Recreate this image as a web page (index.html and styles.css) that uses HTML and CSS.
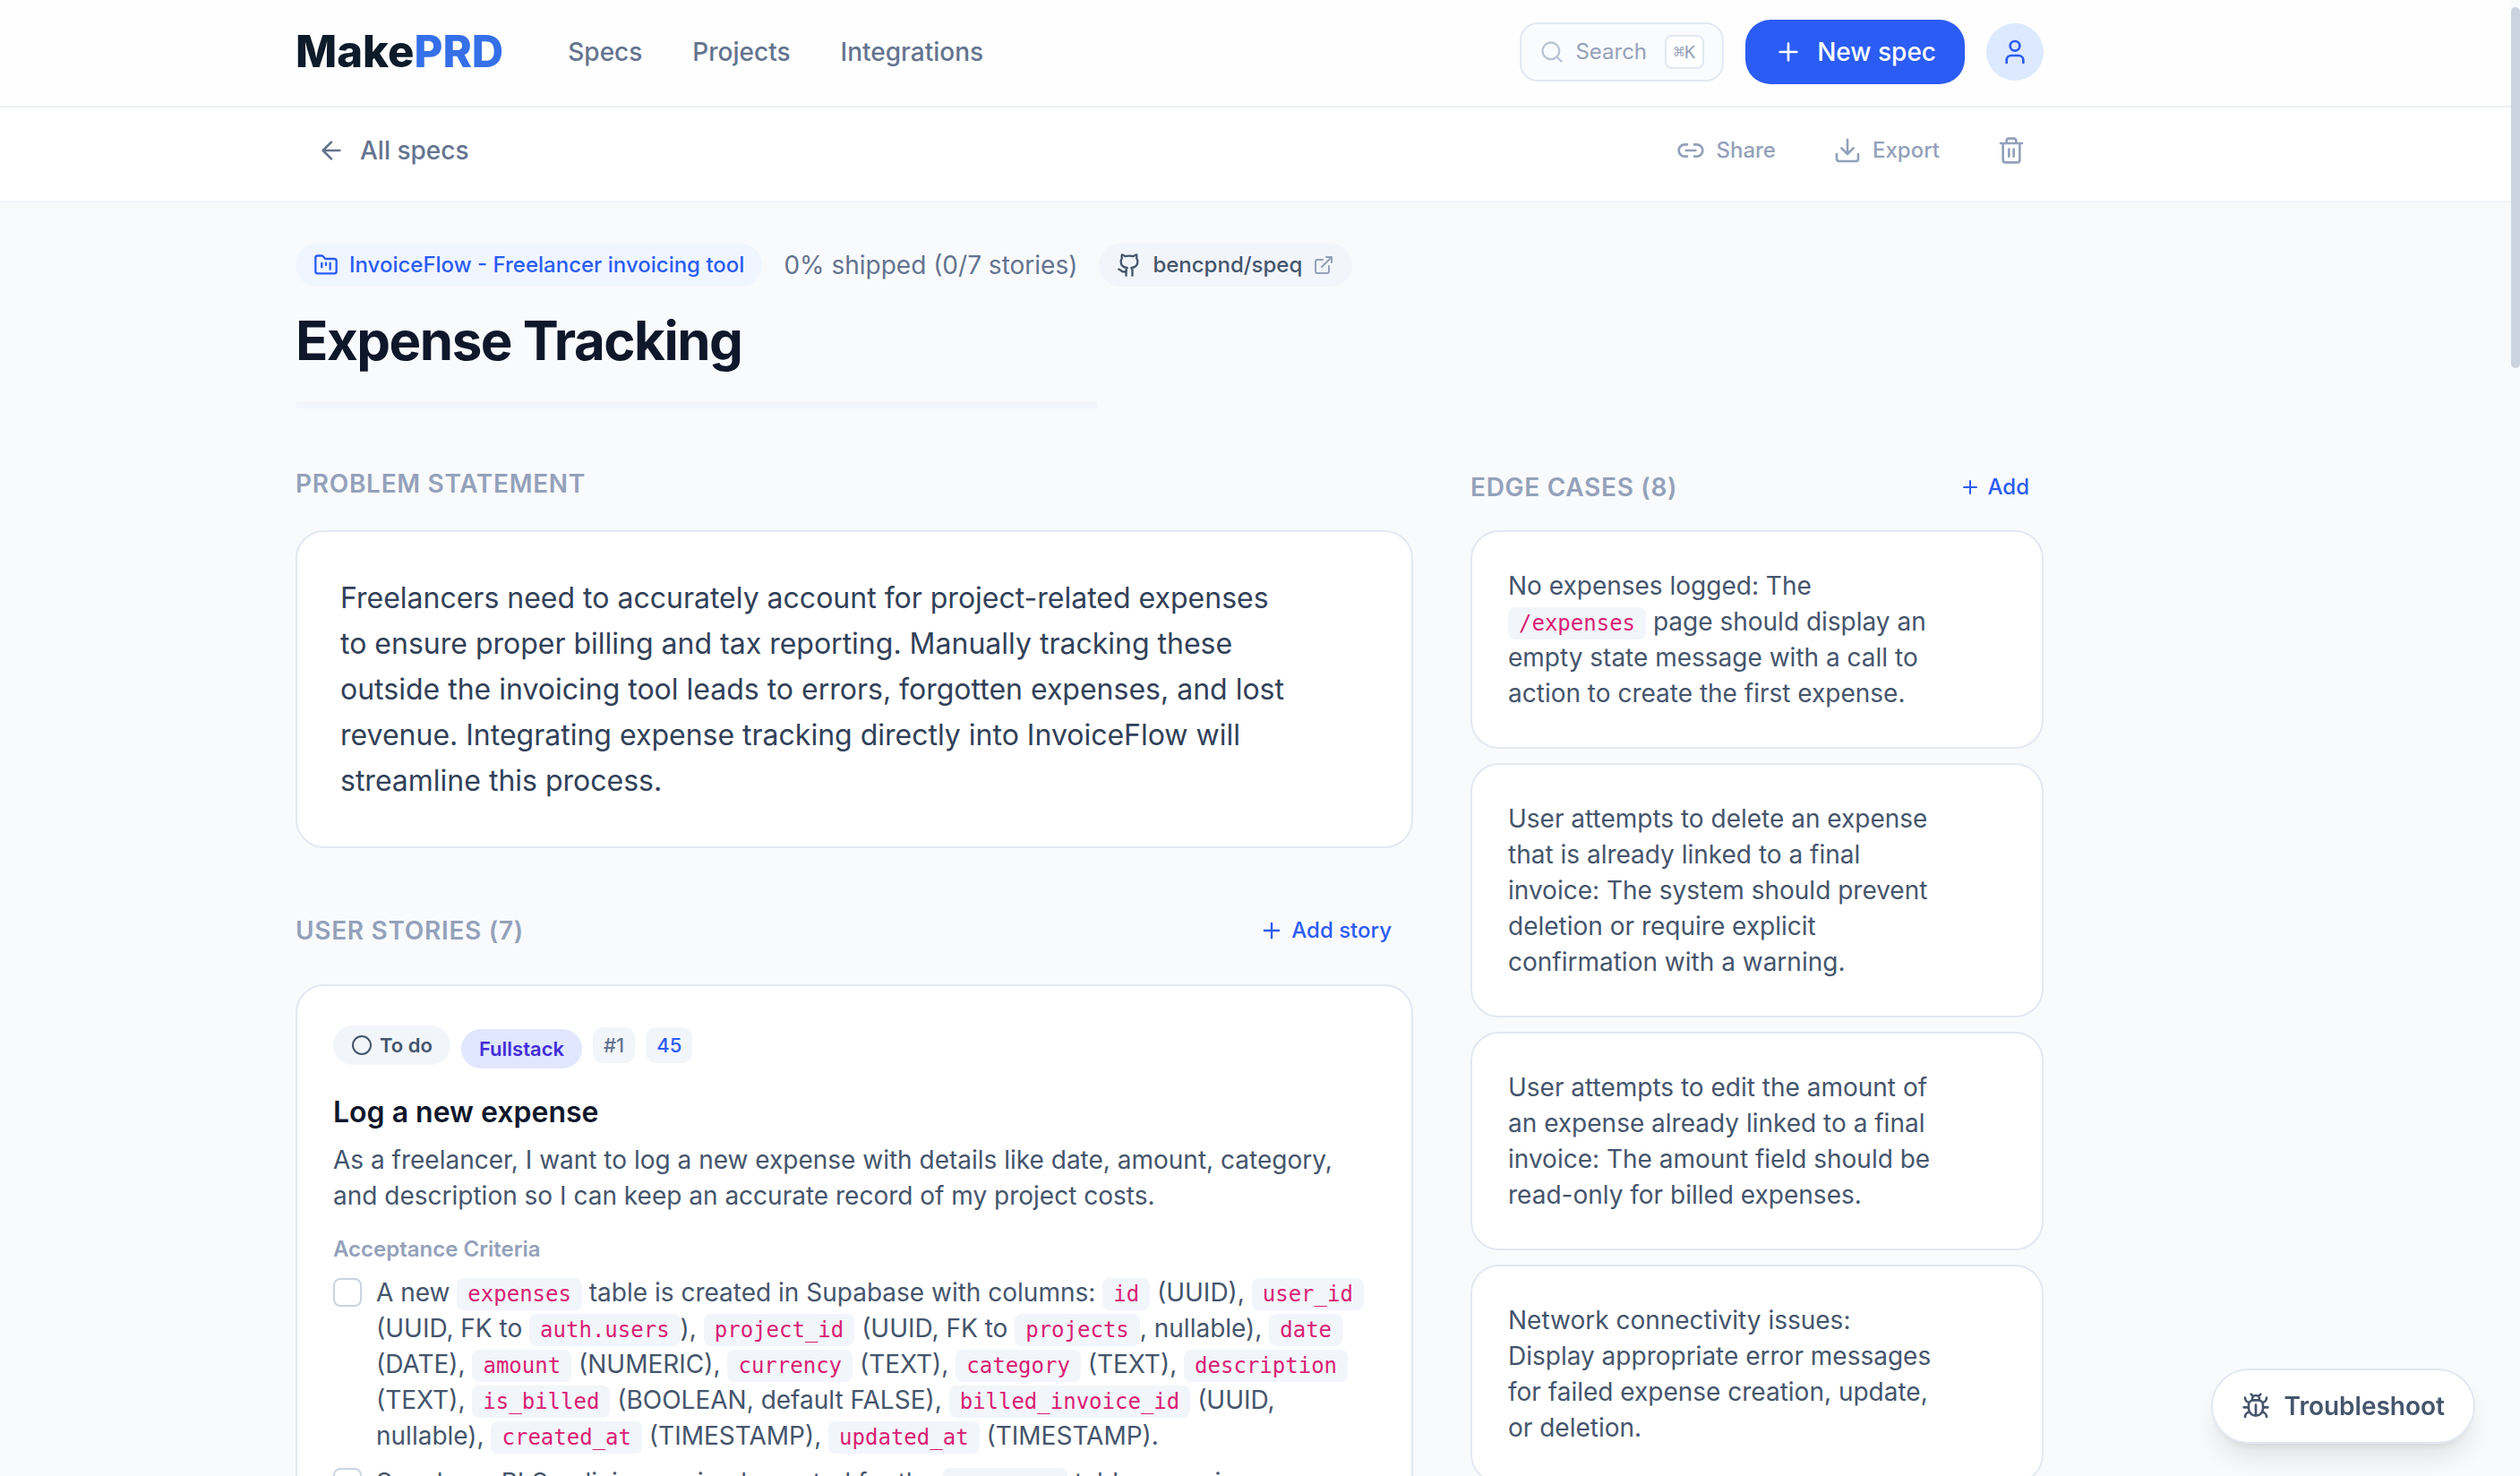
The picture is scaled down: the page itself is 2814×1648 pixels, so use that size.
FILE: index.html
```html
<!DOCTYPE html>
<html lang="en">
  <head>
    <meta charset="UTF-8" />
    <meta name="viewport" content="width=device-width, initial-scale=1.0" />
    <title>Expense Tracking - MakePRD</title>

    <link rel="stylesheet" href="styles.css">
  </head>
  <body>
    <header class="topbar">
      <div class="container topbar-inner">
        <a href="#" class="logo">Make<span>PRD</span></a>
        <nav class="nav">
          <a href="#">Specs</a>
          <a href="#">Projects</a>
          <a href="#">Integrations</a>
        </nav>
        <div class="topbar-right">
          <button type="button" class="search">
            <svg class="icon icon-28" viewBox="0 0 24 24"><circle cx="11" cy="11" r="8" /><path d="m21 21-4.3-4.3" /></svg>
            <span>Search</span>
            <kbd>⌘K</kbd>
          </button>
          <button type="button" class="btn-new">
            <svg class="icon icon-32" viewBox="0 0 24 24"><path d="M5 12h14M12 5v14" /></svg>
            New spec
          </button>
          <button type="button" class="avatar" aria-label="Account">
            <svg class="icon icon-32" viewBox="0 0 24 24"><path d="M19 21v-2a4 4 0 0 0-4-4H9a4 4 0 0 0-4 4v2" /><circle cx="12" cy="7" r="4" /></svg>
          </button>
        </div>
      </div>
    </header>

    <div class="subbar">
      <div class="container subbar-inner">
        <a href="#" class="back">
          <svg class="icon icon-32" viewBox="0 0 24 24"><path d="m12 19-7-7 7-7M19 12H5" /></svg>
          All specs
        </a>
        <div class="actions">
          <button type="button">
            <svg class="icon icon-32" viewBox="0 0 24 24"><path d="M9 17H7A5 5 0 0 1 7 7h2M15 7h2a5 5 0 1 1 0 10h-2M8 12h8" /></svg>
            Share
          </button>
          <button type="button">
            <svg class="icon icon-32" viewBox="0 0 24 24"><path d="M12 15V3M21 15v4a2 2 0 0 1-2 2H5a2 2 0 0 1-2-2v-4M7 10l5 5 5-5" /></svg>
            Export
          </button>
          <button type="button" aria-label="Delete spec">
            <svg class="icon icon-32" viewBox="0 0 24 24"><path d="M3 6h18M19 6v14a2 2 0 0 1-2 2H7a2 2 0 0 1-2-2V6M8 6V4a2 2 0 0 1 2-2h4a2 2 0 0 1 2 2v2M10 11v6M14 11v6" /></svg>
          </button>
        </div>
      </div>
    </div>

    <main class="container main">
      <div class="meta">
        <a href="#" class="pill pill-project">
          <svg class="icon icon-28" viewBox="0 0 24 24"><path d="M4 20h16a2 2 0 0 0 2-2V8a2 2 0 0 0-2-2h-7.93a2 2 0 0 1-1.66-.9l-.82-1.2A2 2 0 0 0 7.93 3H4a2 2 0 0 0-2 2v13c0 1.1.9 2 2 2ZM8 10v4M12 10v2M16 10v6" /></svg>
          InvoiceFlow - Freelancer invoicing tool
        </a>
        <span class="shipped">0% shipped (0/7 stories)</span>
        <a href="#" class="pill pill-repo">
          <svg class="icon icon-28" viewBox="0 0 24 24"><path d="M15 22v-4a4.8 4.8 0 0 0-1-3.5c3 0 6-2 6-5.5.08-1.25-.27-2.48-1-3.5.28-1.15.28-2.35 0-3.5 0 0-1 0-3 1.5-2.64-.5-5.36-.5-8 0C6 2 5 2 5 2c-.3 1.15-.3 2.35 0 3.5A5.403 5.403 0 0 0 4 9c0 3.5 3 5.5 6 5.5-.39.49-.68 1.05-.85 1.65-.17.6-.22 1.23-.15 1.85v4" /><path d="M9 18c-4.51 2-5-2-7-2" /></svg>
          <span>bencpnd/speq</span>
          <svg class="icon icon-24 muted" viewBox="0 0 24 24"><path d="M15 3h6v6M10 14 21 3M18 13v6a2 2 0 0 1-2 2H5a2 2 0 0 1-2-2V8a2 2 0 0 1 2-2h6" /></svg>
        </a>
      </div>
      <h1>Expense Tracking</h1>
      <div class="progress"></div>

      <div class="columns">
        <div class="col-left">
          <section>
            <div class="section-head head-plain">
              <h2>PROBLEM STATEMENT</h2>
            </div>
            <div class="card problem">
              <p>Freelancers need to accurately account for project-related expenses to ensure proper billing and tax reporting. Manually tracking these outside the invoicing tool leads to errors, forgotten expenses, and lost revenue. Integrating expense tracking directly into InvoiceFlow will streamline this process.</p>
            </div>
          </section>

          <section>
            <div class="section-head head-stories">
              <h2>USER STORIES (7)</h2>
              <button type="button" class="add">
                <svg class="icon icon-28" viewBox="0 0 24 24"><path d="M5 12h14M12 5v14" /></svg>
                Add story
              </button>
            </div>
            <article class="card story">
              <div class="badges">
                <button type="button" class="badge status">
                  <svg class="icon icon-24" viewBox="0 0 24 24"><circle cx="12" cy="12" r="10" /></svg>
                  To do
                </button>
                <span class="badge stack">Fullstack</span>
                <span class="tag">#1</span>
                <a href="#" class="tag tag-link">45</a>
              </div>
              <h3>Log a new expense</h3>
              <p>As a freelancer, I want to log a new expense with details like date, amount, category, and description so I can keep an accurate record of my project costs.</p>
              <h4>Acceptance Criteria</h4>
              <ul class="criteria">
                <li>
                  <input type="checkbox" id="crit-1">
                  <label for="crit-1">A new <code>expenses</code> table is created in Supabase with columns: <code>id</code> (UUID), <code>user_id</code> (UUID, FK to <code>auth.users</code>), <code>project_id</code> (UUID, FK to <code>projects</code>, nullable), <code>date</code> (DATE), <code>amount</code> (NUMERIC), <code>currency</code> (TEXT), <code>category</code> (TEXT), <code>description</code> (TEXT), <code>is_billed</code> (BOOLEAN, default FALSE), <code>billed_invoice_id</code> (UUID, nullable), <code>created_at</code> (TIMESTAMP), <code>updated_at</code> (TIMESTAMP).</label>
                </li>
                <li>
                  <input type="checkbox" id="crit-2">
                  <label for="crit-2">Supabase RLS policies are implemented for the <code>expenses</code> table, ensuring</label>
                </li>
              </ul>
            </article>
          </section>
        </div>

        <aside class="col-right">
          <div class="section-head head-edge">
            <h2>EDGE CASES (8)</h2>
            <button type="button" class="add">
              <svg class="icon icon-24" viewBox="0 0 24 24"><path d="M5 12h14M12 5v14" /></svg>
              Add
            </button>
          </div>
          <div class="edge-list">
            <div class="card edge"><p>No expenses logged: The <code>/expenses</code> page should display an empty state message with a call to action to create the first expense.</p></div>
            <div class="card edge"><p>User attempts to delete an expense that is already linked to a final invoice: The system should prevent deletion or require explicit confirmation with a warning.</p></div>
            <div class="card edge"><p>User attempts to edit the amount of an expense already linked to a final invoice: The amount field should be read-only for billed expenses.</p></div>
            <div class="card edge"><p>Network connectivity issues: Display appropriate error messages for failed expense creation, update, or deletion.</p></div>
          </div>
        </aside>
      </div>
    </main>

    <button type="button" class="troubleshoot">
      <svg class="icon icon-32" viewBox="0 0 24 24"><path d="M12 20v-9M14 7a4 4 0 0 1 4 4v3a6 6 0 0 1-12 0v-3a4 4 0 0 1 4-4zM14.12 3.88 16 2M21 21a4 4 0 0 0-3.81-4M21 5a4 4 0 0 1-3.55 3.97M22 13h-4M3 21a4 4 0 0 1 3.81-4M3 5a4 4 0 0 0 3.55 3.97M6 13H2M8 2l1.88 1.88M9 7.13V6a3 3 0 1 1 6 0v1.13" /></svg>
      Troubleshoot
    </button>
    <div class="scroll-thumb"></div>
  </body>
</html>
```

FILE: styles.css
```css
* {
  margin: 0;
  padding: 0;
  box-sizing: border-box;
}

body {
  height: 100vh;
  overflow: hidden;
  padding-right: 10px;
  background: #f9fafc;
  color: #45556c;
  font-family: Inter, "Liberation Sans", sans-serif;
  font-size: 28px;
  line-height: 40px;
}

a {
  color: inherit;
  text-decoration: none;
}

button {
  display: flex;
  align-items: center;
  border: 0;
  background: none;
  color: inherit;
  font: inherit;
  white-space: nowrap;
  cursor: pointer;
}

ul {
  list-style: none;
}

.icon {
  flex: none;
  fill: none;
  stroke: currentColor;
  stroke-width: 2;
  stroke-linecap: round;
  stroke-linejoin: round;
}

.icon-24 {
  width: 24px;
  height: 24px;
}

.icon-28 {
  width: 28px;
  height: 28px;
}

.icon-32 {
  width: 32px;
  height: 32px;
}

.muted {
  color: #94a1ba;
}

.container {
  max-width: 2144px;
  margin: 0 auto;
  padding-right: 192px;
}

/* top bar */
.topbar {
  background: #fefefe;
  border-bottom: 2px solid #edf1f6;
}

.topbar-inner {
  display: flex;
  align-items: center;
  padding-top: 22px;
  padding-bottom: 24px;
}

.logo {
  margin-right: 72px;
  color: #0d1b2a;
  font-size: 49px;
  line-height: 56px;
  font-weight: 800;
}

.logo span {
  color: #3570e8;
}

.nav {
  display: flex;
  gap: 56px;
  color: #64748f;
  font-weight: 500;
}

.topbar-right {
  display: flex;
  align-items: center;
  gap: 24px;
  margin-left: auto;
}

.search {
  gap: 12px;
  height: 66px;
  padding: 0 20px;
  border: 2px solid #e3e8f1;
  border-radius: 20px;
  background: #fafbfd;
  color: #94a1ba;
  font-size: 24px;
}

.search .icon {
  color: #bac4d5;
}

.search kbd {
  margin-left: 8px;
  padding: 0 8px;
  border: 2px solid #e3e8f1;
  border-radius: 8px;
  background: #fff;
  font-family: "DejaVu Sans Mono", monospace;
  font-size: 20px;
  line-height: 34px;
}

.btn-new {
  gap: 16px;
  height: 72px;
  padding: 0 32px;
  border-radius: 28px;
  background: #2b5cf3;
  color: #fff;
  font-weight: 500;
}

.avatar {
  justify-content: center;
  width: 64px;
  height: 64px;
  border-radius: 50%;
  background: #dde9fe;
  color: #2b5cf3;
}

/* back link and actions */
.subbar {
  background: #fff;
  border-bottom: 2px solid #f2f5fa;
}

.subbar-inner {
  display: flex;
  align-items: center;
  justify-content: space-between;
  padding-top: 16px;
  padding-bottom: 24px;
}

.back {
  display: flex;
  align-items: center;
  gap: 16px;
  padding-left: 24px;
  color: #64748f;
  font-weight: 500;
}

.actions {
  display: flex;
  gap: 24px;
  color: #94a1ba;
}

.actions button {
  gap: 12px;
  height: 64px;
  padding: 0 20px;
  font-size: 24px;
  font-weight: 500;
}

/* page header */
.main {
  padding-top: 46px;
}

.meta {
  display: flex;
  align-items: center;
  gap: 24px;
  margin-bottom: 24px;
}

.pill {
  display: flex;
  align-items: center;
  gap: 12px;
  height: 48px;
  padding: 0 20px;
  border-radius: 24px;
  font-size: 24px;
  font-weight: 500;
}

.pill-project {
  background: #eff6ff;
  color: #2b5cf3;
}

.pill-repo {
  background: #f2f5fa;
  color: #45556c;
}

.shipped {
  color: #64748f;
}

h1 {
  color: #0f172b;
  font-size: 60px;
  line-height: 72px;
  font-weight: 700;
  letter-spacing: -0.025em;
}

.progress {
  max-width: 896px;
  height: 8px;
  margin-top: 32px;
  border-radius: 4px;
  background: #f2f5fa;
}

/* columns */
.columns {
  display: grid;
  grid-template-columns: minmax(0, 1fr) 640px;
  gap: 64px;
  margin-top: 64px;
}

.col-left {
  display: flex;
  flex-direction: column;
  gap: 64px;
}

.section-head {
  display: flex;
  align-items: center;
  justify-content: space-between;
}

.section-head h2 {
  color: #94a1ba;
  font-size: 28px;
  line-height: 40px;
  font-weight: 600;
  letter-spacing: 0.025em;
}

.head-plain {
  margin-bottom: 32px;
}

.head-stories {
  height: 56px;
  margin-bottom: 32px;
}

.head-edge {
  height: 48px;
  margin-bottom: 24px;
}

.add {
  gap: 8px;
  padding: 0 16px;
  color: #2b5cf3;
  font-size: 24px;
  font-weight: 500;
}

.head-stories .add {
  padding: 0 24px;
}

.card {
  border: 2px solid #e3e8f1;
  border-radius: 32px;
  background: #fff;
}

.problem {
  padding: 48px;
}

.problem p {
  padding-right: 80px;
  color: #314158;
  font-size: 32px;
  line-height: 51px;
}

/* story card */
.story {
  padding: 40px;
}

.badges {
  display: flex;
  align-items: center;
  gap: 12px;
  height: 52px;
  margin-bottom: 24px;
}

.badge {
  display: flex;
  align-items: center;
  gap: 8px;
  height: 44px;
  padding: 0 20px;
  border-radius: 22px;
  font-size: 22px;
  font-weight: 600;
}

.status {
  background: #f2f5fa;
}

.stack {
  align-self: flex-end;
  background: #e0e7ff;
  color: #432dd7;
}

.tag {
  padding: 0 12px;
  border-radius: 12px;
  background: #f2f5fa;
  color: #64748f;
  font-size: 22px;
  font-weight: 500;
}

.tag-link {
  color: #2b5cf3;
}

.story h3 {
  margin-bottom: 8px;
  color: #0f172b;
  font-size: 32px;
  line-height: 50px;
  font-weight: 600;
}

.story h4 {
  margin: 24px 0 12px;
  color: #94a1ba;
  font-size: 24px;
  line-height: 32px;
  font-weight: 600;
}

.criteria {
  display: flex;
  flex-direction: column;
  gap: 12px;
}

.criteria li {
  display: flex;
  align-items: flex-start;
  gap: 16px;
}

.criteria input {
  flex: none;
  appearance: none;
  width: 32px;
  height: 32px;
  margin-top: 4px;
  border: 2px solid #cad5e2;
  border-radius: 8px;
  background: #fff;
}

code {
  padding: 4px 12px;
  border-radius: 8px;
  background: #f2f5fa;
  color: #d81e74;
  font-family: "DejaVu Sans Mono", monospace;
  font-size: 24px;
  line-height: 24px;
}

/* edge cases */
.edge-list {
  display: flex;
  flex-direction: column;
  gap: 16px;
}

.edge {
  padding: 40px;
}

.edge p {
  padding-right: 72px;
}

/* floating parts */
.troubleshoot {
  position: fixed;
  right: 50px;
  bottom: 36px;
  gap: 16px;
  height: 84px;
  padding: 0 32px;
  border: 2px solid #e3e8f1;
  border-radius: 42px;
  background: #fff;
  box-shadow: 0 20px 30px -6px rgba(0, 0, 0, 0.1), 0 8px 12px -8px rgba(0, 0, 0, 0.1);
  font-weight: 600;
}

.scroll-thumb {
  position: fixed;
  top: 8px;
  right: 0;
  width: 10px;
  height: 403px;
  border-radius: 5px;
  background: #cbd3e0;
}
```
